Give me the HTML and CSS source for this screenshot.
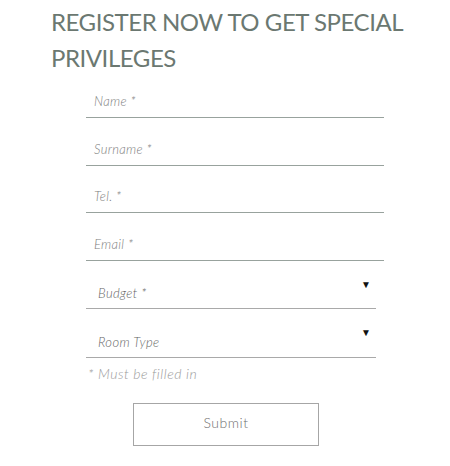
FILE: index.html
```html
<!DOCTYPE html>
<html>
<head>
<meta charset="utf-8">
<link rel="stylesheet" href="styles.css">
</head>
<body>
<div class="page">
  <h1 class="title">REGISTER NOW TO GET SPECIAL<br>PRIVILEGES</h1>
  <form class="form">
    <div class="field"><span class="ph">Name *</span></div>
    <div class="field"><span class="ph">Surname *</span></div>
    <div class="field"><span class="ph">Tel. *</span></div>
    <div class="field"><span class="ph">Email *</span></div>
    <div class="field select"><span class="ph">Budget *</span><span class="arrow">▼</span></div>
    <div class="field select"><span class="ph">Room Type</span><span class="arrow">▼</span></div>
    <p class="note">* Must be filled in</p>
    <div class="actions"><button type="button" class="submit">Submit</button></div>
  </form>
</div>
</body>
</html>
```
FILE: styles.css
```css
html, body { margin: 0; padding: 0; background: #fff; }
.page { font-family: "Lato", "Open Sans", sans-serif; }
.title {
  margin: 0;
  padding: 4px 0 0 51px;
  font-size: 24px;
  font-weight: 400;
  line-height: 36px;
  color: #6b7871;
  letter-spacing: -0.45px;
  white-space: nowrap;
}
.form { margin: -5.5px 0 0 86px; width: 298px; }
.field {
  height: 46.5px;
  border-bottom: 1px solid #98a29d;
  display: flex;
  align-items: flex-end;
  position: relative;
  box-sizing: content-box;
}
.ph {
  font-style: italic;
  font-size: 13px;
  font-weight: 300;
  color: #7e7e7e;
  padding: 0 0 8px 8px;
  letter-spacing: 0.3px;
}
.select { width: 290px; border-bottom-color: #a9a9a9; height: 47.5px; }
.select .ph { padding-left: 12px; padding-bottom: 7px; color: #666; letter-spacing: 0.4px; }
.arrow {
  position: absolute;
  right: 5px;
  top: 17px;
  font-size: 10px;
  color: #111;
}
.note {
  margin: 7px 0 0 2px;
  font-style: italic;
  font-size: 14px;
  font-weight: 300;
  color: #9a9a9a;
  letter-spacing: 0.5px;
}
.actions { padding: 21px 0 0 47px; }
.submit {
  display: block;
  width: 186px;
  height: 43px;
  padding: 0 0 4px;
  background: #fff;
  border: 1px solid #a6a6a6;
  font-family: "Lato", sans-serif;
  font-size: 14px;
  font-weight: 300;
  color: #707070;
  letter-spacing: 0.5px;
  cursor: pointer;
}
```
